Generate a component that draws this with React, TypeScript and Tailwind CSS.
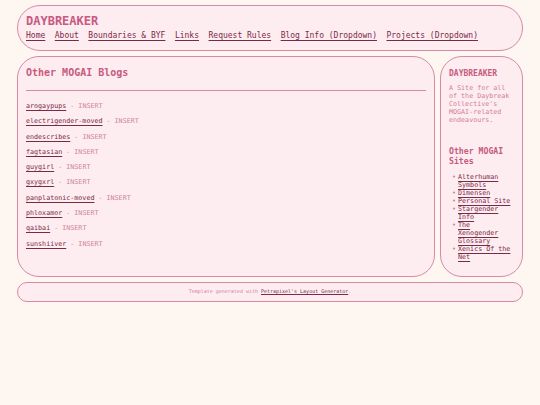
const blogs = [
  'arogaypups',
  'electrigender-moved',
  'endescribes',
  'fagtasian',
  'guygirl',
  'gxygxrl',
  'panplatonic-moved',
  'phloxamor',
  'qaibai',
  'sunshiiver',
];

const navLinks = ['Home', 'About', 'Boundaries & BYF', 'Links', 'Request Rules', 'Blog Info (Dropdown)', 'Projects (Dropdown)'];

const sites = ['Alterhuman Symbols', 'Dimensen', 'Personal Site', 'Stargender Info', 'The Xenogender Glossary', 'Xenics Of the Net'];

export default function App() {
  return (
    <div className="min-h-[405px] w-[540px] bg-[#fdf6f1] pt-[5px] font-['DejaVu_Sans_Mono',monospace]">
      <div className="mx-auto flex w-[506px] flex-col gap-[5px]">
        {/* Header */}
        <header className="flex h-[46px] flex-col rounded-[24px] border border-[#d68aa6] bg-[#fdedf0] px-[8px] pt-[8px]">
          <h1 className="text-[12px] font-bold leading-[14px] text-[#c85a80]">DAYBREAKER</h1>
          <nav className="mt-[2px] flex gap-[9.5px] text-[8px] leading-[12px]">
            {navLinks.map((l) => (
              <a key={l} href="#" className="text-[#7a2a48] underline underline-offset-[1.5px]">
                {l}
              </a>
            ))}
          </nav>
        </header>

        <div className="flex gap-[5px]">
          {/* Main */}
          <main className="flex h-[221px] w-[418px] flex-col rounded-[22px] border border-[#d68aa6] bg-[#fdedf0] px-[8px] pt-[9px]">
            <h2 className="text-[10px] font-bold leading-[14px] text-[#c85a80]">Other MOGAI Blogs</h2>
            <div className="mt-[10px] h-px w-full bg-[#d68aa6]" />
            <ul className="mt-[11px] flex flex-col gap-[7px] text-[6.7px] leading-[8.3px]">
              {blogs.map((b) => (
                <li key={b} className="text-[#d0809c]">
                  <a href="#" className="text-[#7a2a48] underline underline-offset-[1.5px]">
                    {b}
                  </a>{' '}
                  - INSERT
                </li>
              ))}
            </ul>
          </main>

          {/* Sidebar */}
          <aside className="flex h-[221px] w-[83px] flex-col rounded-[22px] border border-[#d68aa6] bg-[#fdedf0] px-[8px] pt-[12px]">
            <h3 className="text-[8px] font-bold leading-[10px] text-[#c85a80]">DAYBREAKER</h3>
            <p className="mt-[5px] text-[6.7px] leading-[8px] text-[#d0809c]">
              A Site for all of the Daybreak Collective's MOGAI-related endeavours.
            </p>
            <h3 className="mt-[23px] text-[8.2px] font-bold leading-[9.5px] text-[#c85a80]">Other MOGAI Sites</h3>
            <ul className="mt-[7px] flex flex-col text-[6.7px] leading-[8px]">
              {sites.map((s) => (
                <li key={s} className="flex gap-[2px] pl-[3px] text-[#d0809c]">
                  <span>•</span>
                  <a href="#" className="text-[#7a2a48] underline underline-offset-[1.5px]">
                    {s}
                  </a>
                </li>
              ))}
            </ul>
          </aside>
        </div>

        {/* Footer */}
        <footer className="flex h-[20px] items-center justify-center rounded-[10px] border border-[#d68aa6] bg-[#fdedf0] text-[5px] text-[#d0809c]">
          <span>
            Template generated with{' '}
            <a href="#" className="text-[#7a2a48] underline">
              Petrapixel's Layout Generator
            </a>
            .
          </span>
        </footer>
      </div>
    </div>
  );
}
